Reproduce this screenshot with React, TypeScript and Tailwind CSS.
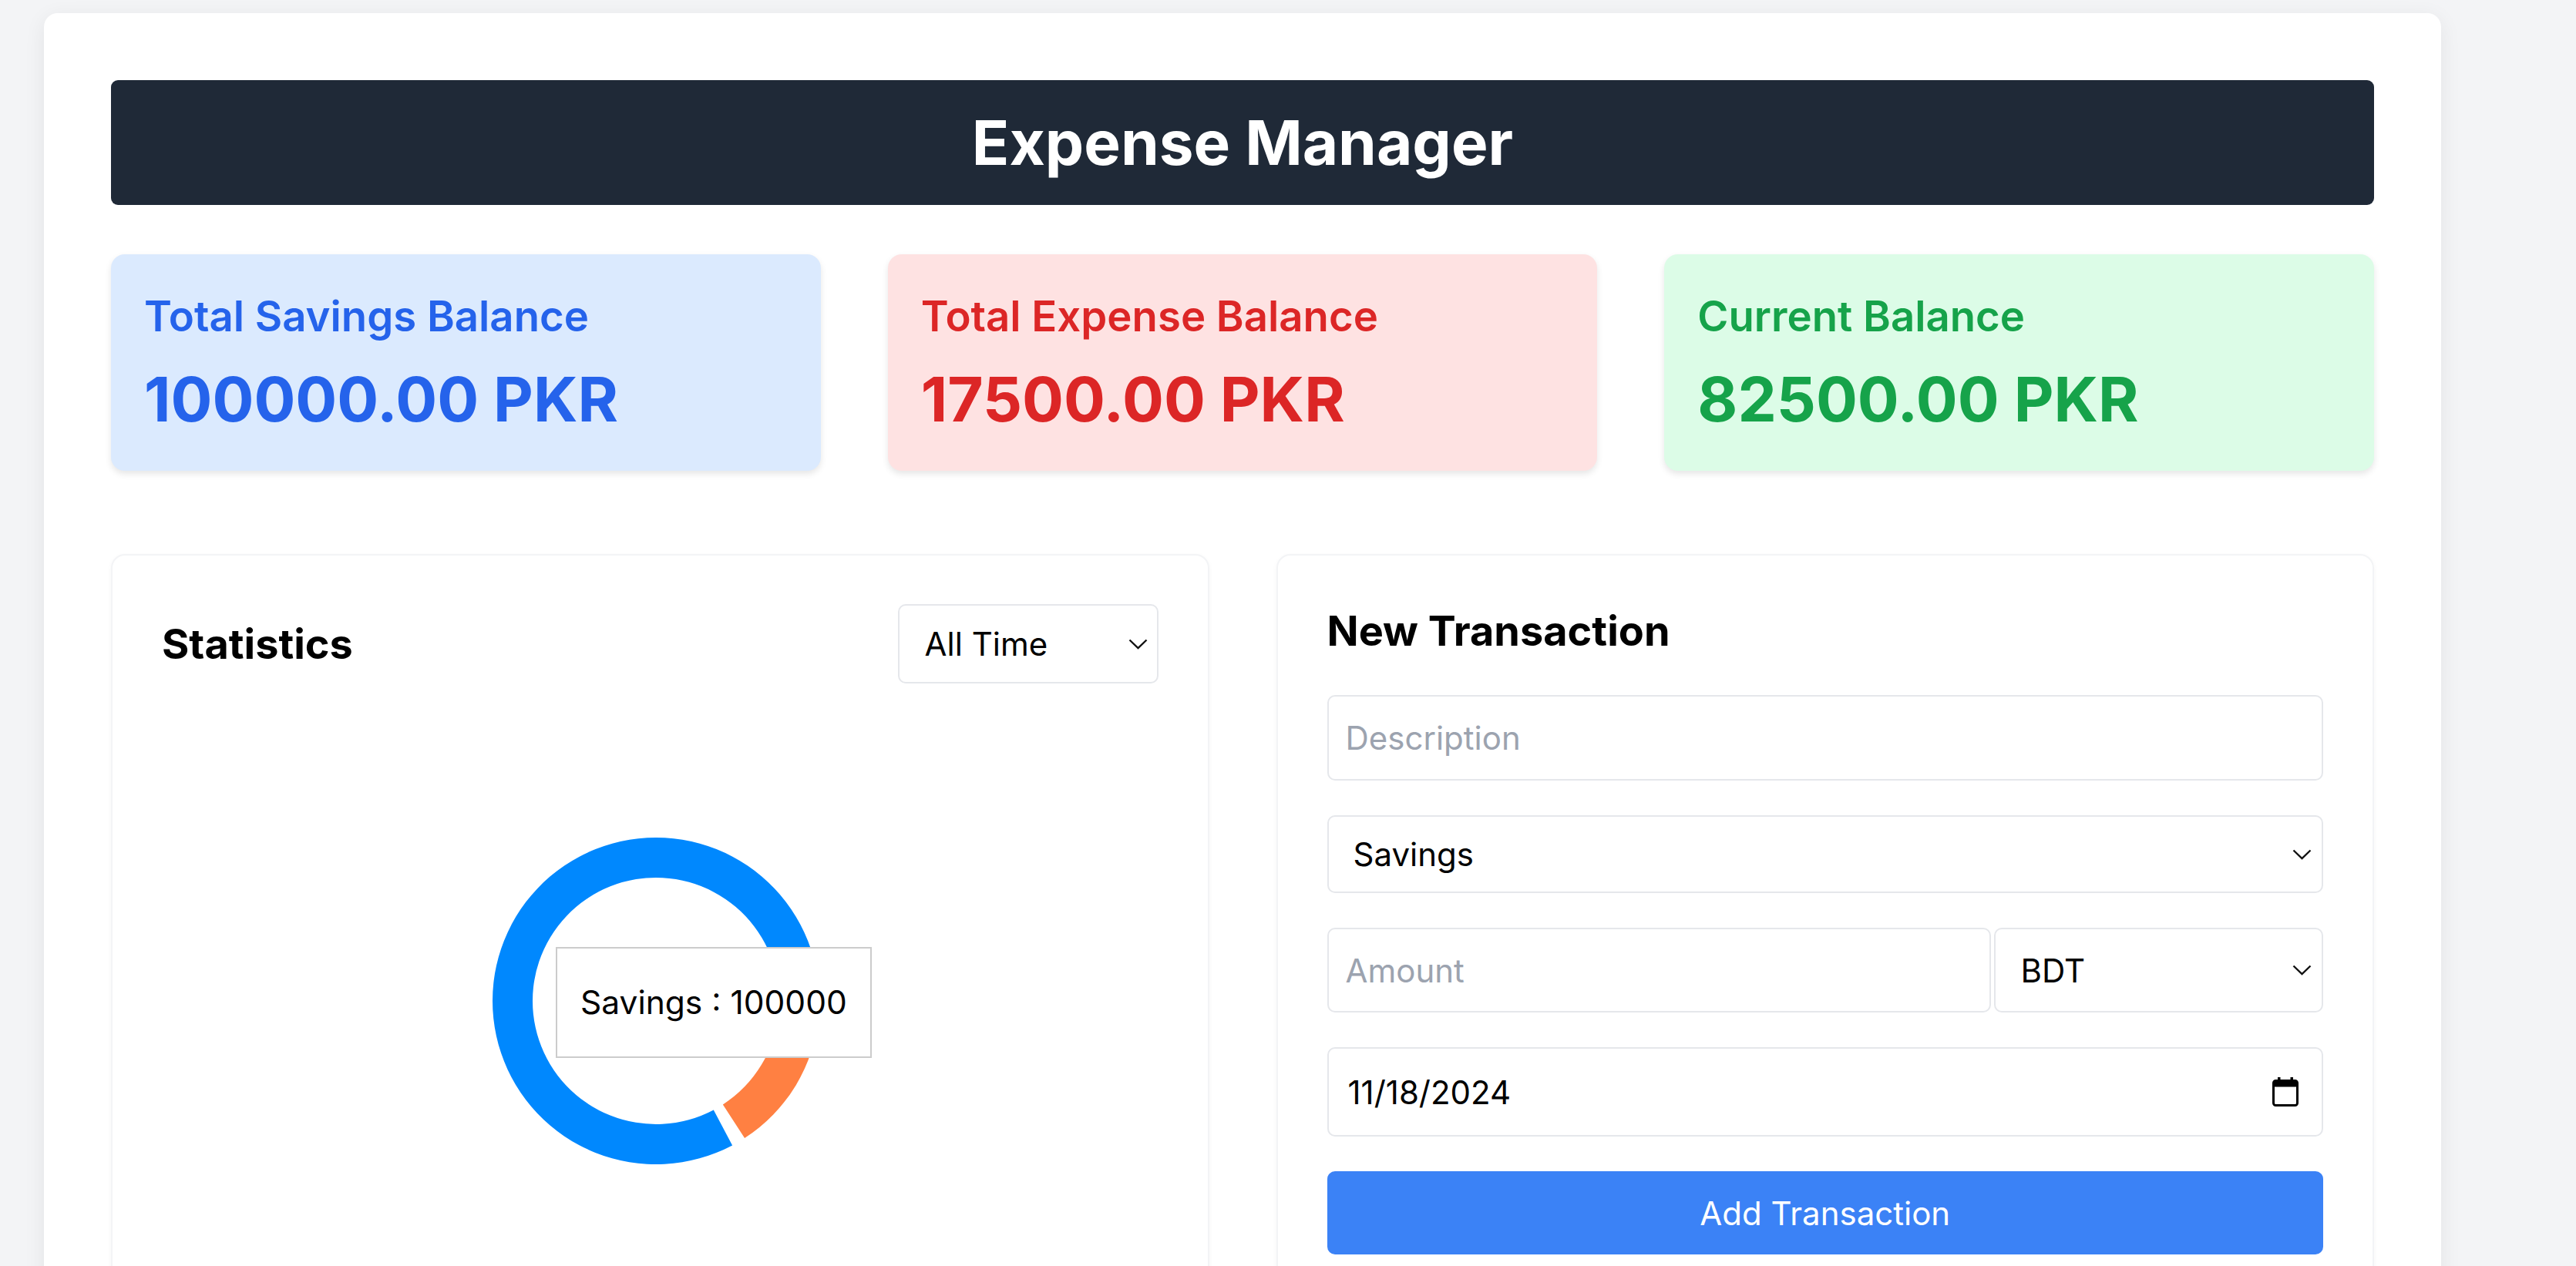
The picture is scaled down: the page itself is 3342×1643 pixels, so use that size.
import React from 'react';

type Slice = { name: string; value: number; color: string };

const slices: Slice[] = [
  { name: 'Savings', value: 100000, color: '#0088FE' },
  { name: 'Expense', value: 17500, color: '#FF8042' },
];

const stats = [
  { label: 'Total Savings Balance', amount: '100000.00 PKR', box: 'bg-[#dbeafe]', text: 'text-[#2563eb]' },
  { label: 'Total Expense Balance', amount: '17500.00 PKR', box: 'bg-[#fee2e2]', text: 'text-[#dc2626]' },
  { label: 'Current Balance', amount: '82500.00 PKR', box: 'bg-[#dcfce7]', text: 'text-[#16a34a]' },
];

// donut arc between two angles (degrees, counter-clockwise from 3 o'clock)
const arcPath = (cx: number, cy: number, r0: number, r1: number, a0: number, a1: number) => {
  const pt = (r: number, a: number) => {
    const rad = (a * Math.PI) / 180;
    return `${(cx + r * Math.cos(rad)).toFixed(2)} ${(cy - r * Math.sin(rad)).toFixed(2)}`;
  };
  const large = a1 - a0 > 180 ? 1 : 0;
  return `M ${pt(r1, a0)} A ${r1} ${r1} 0 ${large} 0 ${pt(r1, a1)} L ${pt(r0, a1)} A ${r0} ${r0} 0 ${large} 1 ${pt(r0, a0)} Z`;
};

const Chevron = () => (
  <svg width="25" height="14" viewBox="0 0 25 14" fill="none">
    <path d="M1.5 1.5 L12.5 12 L23.5 1.5" stroke="#111" strokeWidth="2.4" />
  </svg>
);

const CalendarIcon = () => (
  <svg width="34" height="38" viewBox="0 0 34 38">
    <rect x="7" y="0" width="3.5" height="6" fill="#000" />
    <rect x="23.5" y="0" width="3.5" height="6" fill="#000" />
    <rect x="1.5" y="4.5" width="31" height="32" rx="3" fill="none" stroke="#000" strokeWidth="3" />
    <rect x="1.5" y="4.5" width="31" height="8" rx="2" fill="#000" />
  </svg>
);

const DonutChart: React.FC = () => {
  const cx = 641;
  const cy = 412;
  const pad = 5;
  const total = slices.reduce((s, d) => s + d.value, 0);
  const usable = 360 - pad * slices.length;
  let start = 0;
  const arcs = slices.map((d) => {
    const sweep = (d.value / total) * usable;
    const a = { ...d, a0: start, a1: start + sweep };
    start += sweep + pad;
    return a;
  });

  return (
    <div className="relative h-[824px]">
      <svg width="1292" height="824" viewBox="0 0 1292 824">
        {arcs.map((a) => (
          <path key={a.name} d={arcPath(cx, cy, 160, 212, a.a0, a.a1)} fill={a.color} />
        ))}
      </svg>
      <div className="absolute left-[511px] top-[342px] flex h-[144px] w-[410px] items-center border-2 border-[#cccccc] bg-white pl-[30px] text-[42.5px] leading-none whitespace-nowrap text-black">
        Savings : 100000
      </div>
    </div>
  );
};

export default function App() {
  return (
    <div className="min-h-screen bg-[#f3f4f6] pt-[17px] font-['Inter',sans-serif]">
      <div className="ml-[57px] w-[3110px] rounded-t-[18px] bg-white px-[87px] pt-[87px] pb-[87px] shadow-[0_6px_28px_rgba(0,0,0,0.07)]">
        <div className="flex h-[162px] items-center justify-center rounded-[9px] bg-[#1f2937]">
          <h1 className="text-[80px] leading-none font-bold text-white">Expense Manager</h1>
        </div>

        <div className="mt-[64px] grid grid-cols-3 gap-[87px]">
          {stats.map((s) => (
            <div key={s.label} className={`h-[281px] rounded-[18px] px-[43px] pt-[46px] shadow-[0_4px_8px_rgba(0,0,0,0.1)] ${s.box}`}>
              <p className={`text-[54.5px] leading-[68px] font-semibold ${s.text}`}>{s.label}</p>
              <p className={`mt-[31px] text-[80px] leading-[85px] font-bold ${s.text}`}>{s.amount}</p>
            </div>
          ))}
        </div>

        <div className="mt-[108px] grid grid-cols-2 gap-[87px]">
          <div className="rounded-[18px] border-2 border-[#f3f4f6] bg-white p-[64px] shadow-[0_2px_6px_rgba(0,0,0,0.04)]">
            <div className="-mt-[1px] flex items-center justify-between">
              <h2 className="text-[54px] leading-[68px] font-bold text-black">Statistics</h2>
              <div className="flex h-[103px] w-[338px] items-center justify-between rounded-[10px] border-2 border-[#e5e7eb] pr-[12px] pl-[33px]">
                <span className="text-[42px] text-black">All Time</span>
                <Chevron />
              </div>
            </div>
            <DonutChart />
          </div>

          <div className="rounded-[18px] border-2 border-[#f3f4f6] bg-white p-[64px] shadow-[0_2px_6px_rgba(0,0,0,0.04)]">
            <h2 className="text-[54px] leading-[68px] font-bold text-black">New Transaction</h2>
            <div className="mt-[49px] flex flex-col gap-[45px]">
              <input
                type="text"
                placeholder="Description"
                className="h-[111px] w-full rounded-[10px] border-2 border-[#e5e7eb] px-[22px] text-[42px] text-black outline-none placeholder:text-[#9ca3af]"
              />
              <div className="flex h-[101px] items-center justify-between rounded-[10px] border-2 border-[#e5e7eb] pr-[13px] pl-[32px]">
                <span className="text-[42px] text-black">Savings</span>
                <Chevron />
              </div>
              <div className="flex gap-[4px]">
                <input
                  type="text"
                  placeholder="Amount"
                  className="h-[110px] w-[861px] rounded-[10px] border-2 border-[#e5e7eb] px-[22px] text-[42px] text-black outline-none placeholder:text-[#9ca3af]"
                />
                <div className="flex h-[110px] flex-1 items-center justify-between rounded-[10px] border-2 border-[#e5e7eb] pr-[13px] pl-[33px]">
                  <span className="text-[42px] text-black">BDT</span>
                  <Chevron />
                </div>
              </div>
              <div className="flex h-[116px] items-center justify-between rounded-[10px] border-2 border-[#e5e7eb] pr-[30px] pl-[25px]">
                <span className="text-[42px] text-black">11/18/2024</span>
                <CalendarIcon />
              </div>
              <button className="h-[108px] w-full rounded-[10px] bg-[#3b82f6] text-[42px] text-white">
                Add Transaction
              </button>
            </div>
          </div>
        </div>
      </div>
    </div>
  );
}
